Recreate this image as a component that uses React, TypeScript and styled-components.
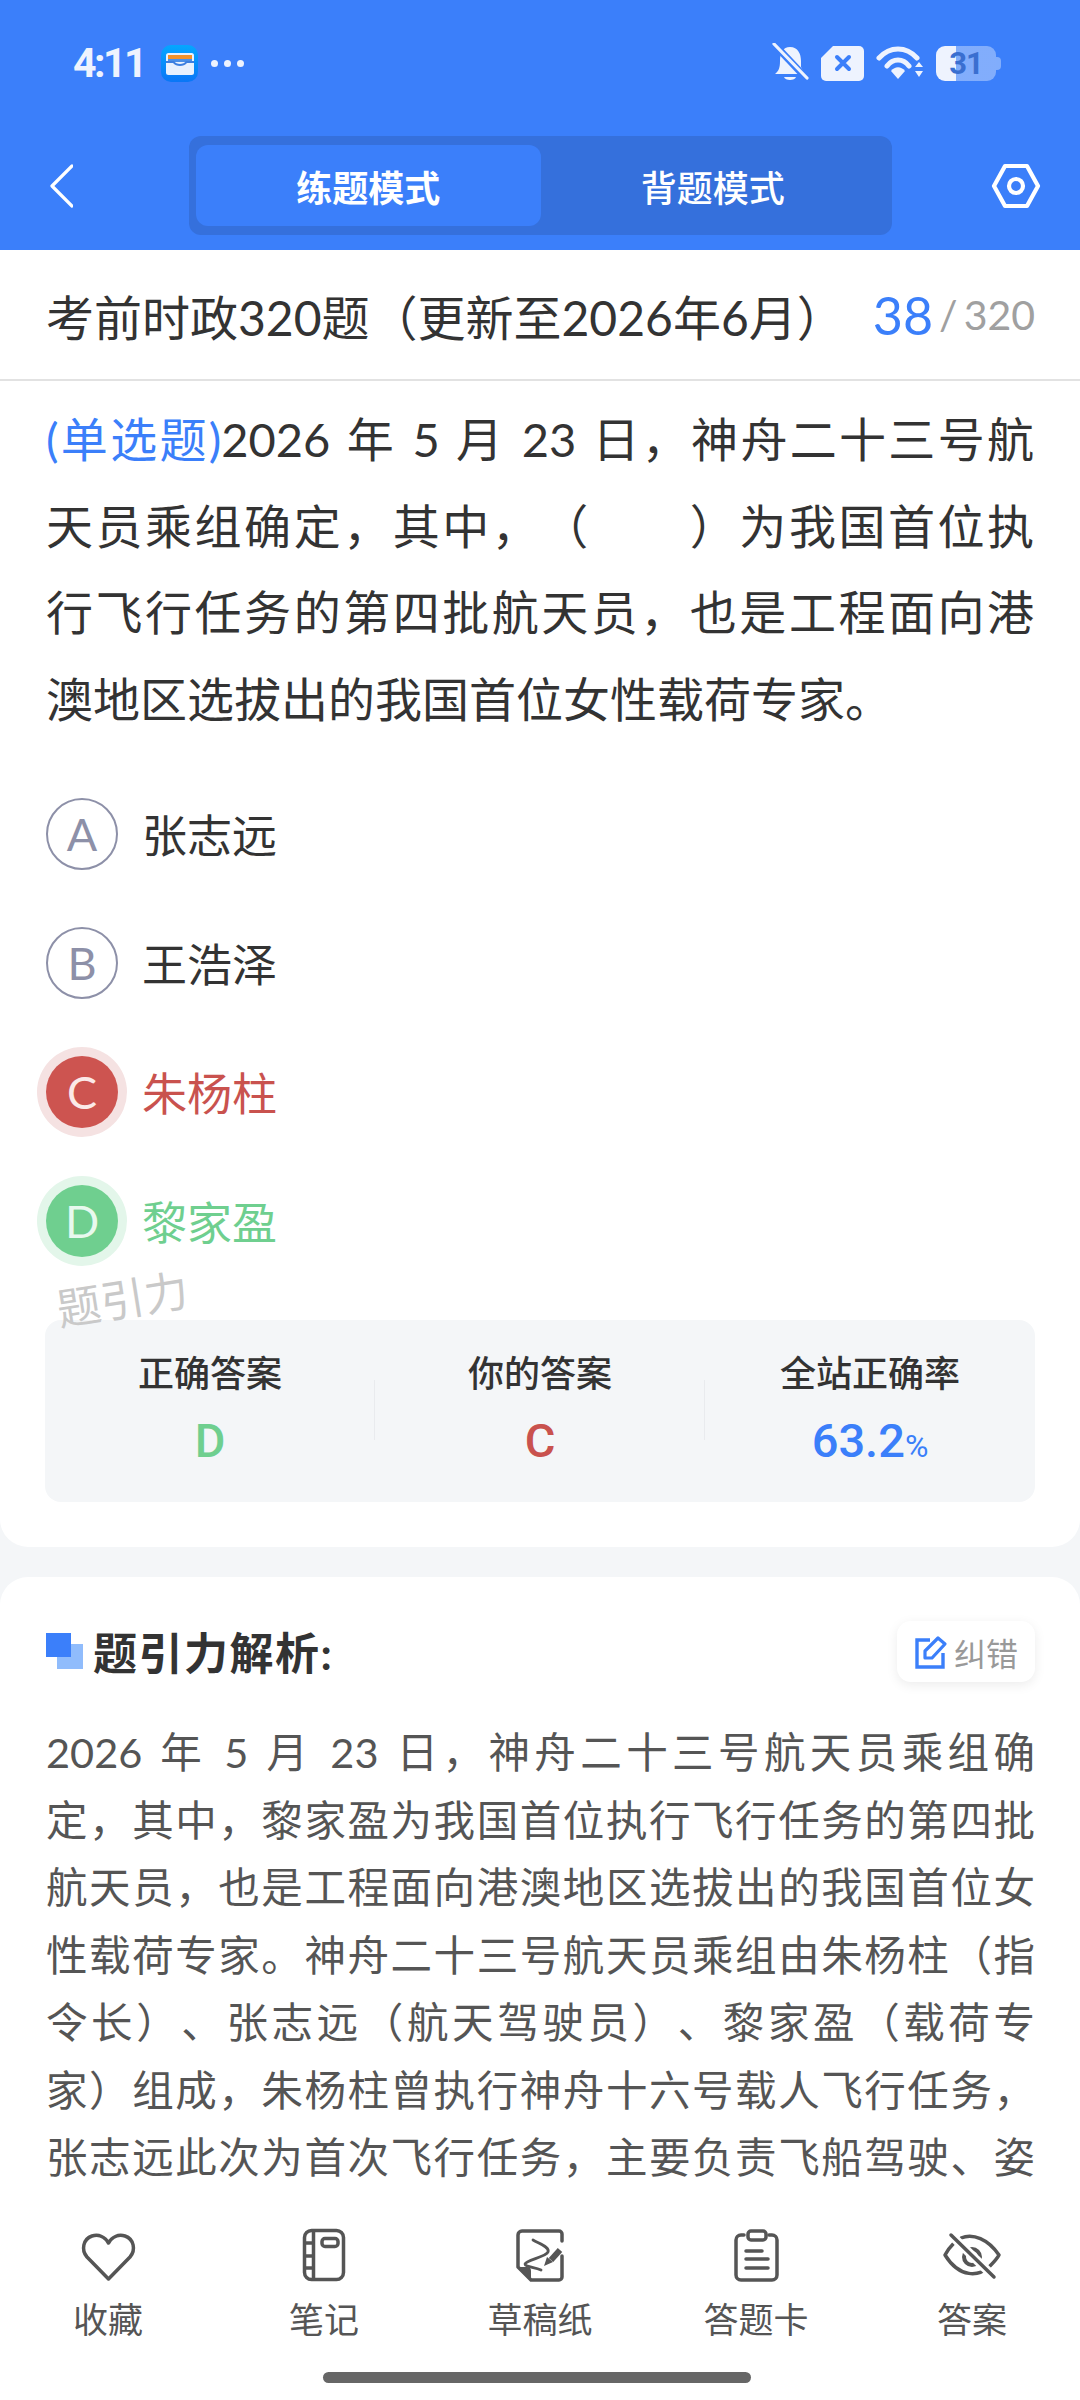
import React from "react";
import styled, { createGlobalStyle } from "styled-components";

const GlobalStyle = createGlobalStyle`
  html, body { margin: 0; padding: 0; background: #f4f6f8; }
  * { box-sizing: border-box; }
  body {
    font-family: Lato, "Noto Sans CJK SC", sans-serif;
    color: #333;
    text-spacing-trim: space-all;
  }
`;

const BLUE = "#3b7ffa";
const RED = "#c9524e";
const GREEN = "#6fcf8f";
const ICON_GREY = "#555";
const STATUS_WHITE = "#eef3fe";

const Page = styled.div`
  width: 1080px;
  height: 2400px;
  display: flex;
  flex-direction: column;
  overflow: hidden;
`;

const Header = styled.header`
  height: 250px;
  flex: none;
  background: ${BLUE};
`;

const StatusBar = styled.div`
  height: 126px;
  display: flex;
  align-items: center;
  padding: 0 79px 0 73px;
`;

const Time = styled.span`
  font-family: Roboto, sans-serif;
  font-size: 41px;
  font-weight: 700;
  letter-spacing: -2.5px;
  color: ${STATUS_WHITE};
  margin-right: 16px;
`;

const Dots = styled.div`
  display: flex;
  gap: 6px;
  margin-left: 13px;
  i {
    width: 7px;
    height: 7px;
    border-radius: 50%;
    background: ${STATUS_WHITE};
  }
`;

const StatusRight = styled.div`
  margin-left: auto;
  display: flex;
  align-items: center;
  gap: 12px;
`;

const Battery = styled.div`
  position: relative;
  width: 60px;
  height: 35px;
  border-radius: 9px;
  background: linear-gradient(90deg, ${STATUS_WHITE} 33%, rgba(255, 255, 255, 0.36) 33%);
  display: flex;
  align-items: center;
  justify-content: center;
  font-family: Roboto, sans-serif;
  font-size: 31px;
  font-weight: 700;
  letter-spacing: -1px;
  color: #3a6fd0;
  margin-right: 5px;
  &::after {
    content: "";
    position: absolute;
    right: -5px;
    top: 11px;
    width: 5px;
    height: 13px;
    border-radius: 0 4px 4px 0;
    background: rgba(255, 255, 255, 0.36);
  }
`;

const NavRow = styled.div`
  margin-top: 10px;
  height: 99px;
  display: flex;
  align-items: center;
  padding: 0 39px 0 49px;
`;

const Tabs = styled.div`
  width: 703px;
  height: 99px;
  margin-left: 116px;
  padding: 9px 7px;
  display: flex;
  border-radius: 12px;
  background: #3570dc;
`;

const Tab = styled.div<{ $active?: boolean }>`
  flex: 1;
  display: flex;
  align-items: center;
  justify-content: center;
  border-radius: 12px;
  font-size: 36px;
  font-weight: ${(p) => (p.$active ? 700 : 500)};
  color: #fff;
  background: ${(p) => (p.$active ? BLUE : "transparent")};
`;

const NavSpacer = styled.div`
  margin-left: auto;
  display: flex;
`;

const Scroll = styled.main`
  flex: 1;
  min-height: 0;
  overflow: hidden;
`;

const QuestionCard = styled.section`
  position: relative;
  background: #fff;
  border-radius: 0 0 28px 28px;
  padding-bottom: 45px;
`;

const TitleRow = styled.div`
  height: 131px;
  padding: 0 45px 0 46px;
  display: flex;
  align-items: center;
  justify-content: space-between;
  border-bottom: 2px solid #e2e2e2;
`;

const Title = styled.h1`
  margin: 0;
  font-size: 48px;
  font-weight: 400;
  color: #333;
  white-space: nowrap;
`;

const Counter = styled.div`
  display: flex;
  align-items: center;
  font-size: 41px;
  color: #a0a0a0;
  b {
    font-size: 52px;
    font-weight: 400;
    color: ${BLUE};
    margin-right: 6px;
  }
  i {
    font-style: normal;
    margin-right: 6px;
  }
`;

const Question = styled.div`
  padding: 15px 46px 0;
`;

const QuestionLine = styled.div<{ $last?: boolean }>`
  font-size: 47px;
  line-height: 86.6px;
  color: #333;
  white-space: nowrap;
  word-spacing: 2px;
  text-align: justify;
  text-align-last: ${(p) => (p.$last ? "left" : "justify")};
  span {
    color: ${BLUE};
  }
`;

const Options = styled.div`
  margin-top: 27px;
  padding: 0 46px;
`;

const OptionRow = styled.div`
  height: 129px;
  display: flex;
  align-items: center;
`;

type Tone = "plain" | "wrong" | "right";

const badgeStyles: Record<Tone, string> = {
  plain: "border: 2px solid #8d90a8; color: #8d90a8; background: #fff;",
  wrong: `background: #cd5450; color: #fbe9e8; box-shadow: 0 0 0 9px #f5e2e2;`,
  right: `background: ${GREEN}; color: #e8f9ee; box-shadow: 0 0 0 9px #e3f6ea;`,
};

const textTones: Record<Tone, string> = { plain: "#333", wrong: RED, right: GREEN };

const Badge = styled.div<{ $tone: Tone }>`
  width: 72px;
  height: 72px;
  flex: none;
  border-radius: 50%;
  display: flex;
  align-items: center;
  justify-content: center;
  font-size: 45px;
  ${(p) => badgeStyles[p.$tone]}
`;

const OptionText = styled.div<{ $tone: Tone }>`
  margin-left: 24px;
  font-size: 45px;
  color: ${(p) => textTones[p.$tone]};
`;

const Watermark = styled.div`
  position: absolute;
  left: 56px;
  top: 1015px;
  font-size: 44px;
  color: #c9c9c9;
  transform: rotate(-9deg);
  pointer-events: none;
`;

const Stats = styled.div`
  margin: 35px 45px 0;
  height: 182px;
  padding-top: 28px;
  display: grid;
  grid-template-columns: repeat(3, 1fr);
  background: #f4f6f8;
  border-radius: 16px;
`;

const Stat = styled.div<{ $divider?: boolean }>`
  position: relative;
  display: flex;
  flex-direction: column;
  align-items: center;
  &::after {
    content: "";
    display: ${(p) => (p.$divider ? "block" : "none")};
    position: absolute;
    right: 0;
    top: 32px;
    width: 1px;
    height: 60px;
    background: #e9ebee;
  }
`;

const StatLabel = styled.div`
  font-size: 36px;
  line-height: 50px;
  font-weight: 500;
  color: #333;
`;

const StatValue = styled.div<{ $color: string }>`
  margin-top: 18px;
  font-family: Roboto, sans-serif;
  font-size: 47px;
  line-height: 50px;
  font-weight: 500;
  color: ${(p) => p.$color};
  small {
    font-size: 32px;
    font-weight: 400;
  }
`;

const AnalysisCard = styled.section`
  margin-top: 30px;
  padding: 44px 45px 0 46px;
  background: #fff;
  border-radius: 28px 28px 0 0;
`;

const AnalysisHead = styled.div`
  height: 61px;
  display: flex;
  align-items: center;
  justify-content: space-between;
`;

const AnalysisTitle = styled.h2`
  margin: 0 0 2px;
  display: flex;
  align-items: center;
  font-size: 44px;
  letter-spacing: 1.5px;
  font-weight: 700;
  color: #333;
`;

const TitleMark = styled.span`
  position: relative;
  width: 37px;
  height: 36px;
  margin-right: 10px;
  &::before,
  &::after {
    content: "";
    position: absolute;
  }
  &::before {
    right: 0;
    bottom: 0;
    width: 26px;
    height: 25px;
    background: #90bcfc;
  }
  &::after {
    left: 0;
    top: 0;
    width: 25px;
    height: 24px;
    background: ${BLUE};
  }
`;

const ReportButton = styled.button`
  width: 138px;
  height: 61px;
  border: 0;
  border-radius: 14px;
  background: #fff;
  box-shadow: 0 3px 12px rgba(0, 0, 0, 0.08);
  display: flex;
  align-items: center;
  justify-content: center;
  gap: 6px;
  padding: 0;
  font-family: inherit;
  font-size: 32px;
  color: #999;
`;

const AnalysisBody = styled.div`
  margin-top: 37px;
`;

const AnalysisLine = styled.div`
  font-size: 41.5px;
  line-height: 67.5px;
  color: #555;
  white-space: nowrap;
  word-spacing: 3px;
  text-align: justify;
  text-align-last: justify;
`;

const BottomBar = styled.footer`
  height: 196px;
  flex: none;
  background: #fff;
  padding-top: 22px;
  display: flex;
  flex-direction: column;
  align-items: center;
`;

const BarItems = styled.div`
  width: 100%;
  display: grid;
  grid-template-columns: repeat(5, 1fr);
`;

const BarItem = styled.div`
  display: flex;
  flex-direction: column;
  align-items: center;
  gap: 11px;
`;

const BarLabel = styled.span`
  font-size: 35px;
  line-height: 44px;
  color: #555;
`;

const HomeIndicator = styled.div`
  margin: 31px 6px 0 0;
  width: 428px;
  height: 11px;
  border-radius: 6px;
  background: #666;
`;

const WalletIcon = () => (
  <svg width="37" height="37" viewBox="0 0 37 37">
    <defs>
      <linearGradient id="wallet" x1="0" y1="0" x2="0" y2="1">
        <stop offset="0" stopColor="#05a6ff" />
        <stop offset="1" stopColor="#0a76f6" />
      </linearGradient>
    </defs>
    <rect width="37" height="37" rx="10" fill="url(#wallet)" />
    <rect x="5" y="8" width="28" height="22" rx="2.5" fill="#e8f1fe" />
    <rect x="7" y="10" width="24" height="4" fill="#f0912a" />
    <rect x="7" y="14" width="24" height="3" fill="#4a8fe8" />
    <path d="M5 16 H13 C15 20 23 20 25 16 H33 V18 H26 C23 22 15 22 12 18 H5Z" fill="#3d7fe0" />
  </svg>
);

const BellIcon = () => (
  <svg width="37" height="40" viewBox="0 0 37 40">
    <path d="M18 4 C26 4 29 11 29 18 L29 24 L33 31 H3 C7 28 8 24 8 18 C8 10 11 4 18 4Z" fill={STATUS_WHITE} />
    <path d="M12 34 H24 C23 38 13 38 12 34Z" fill={STATUS_WHITE} />
    <path d="M3 2 L35 36" stroke={BLUE} strokeWidth="7" />
    <path d="M2 1 L35 35" stroke={STATUS_WHITE} strokeWidth="3.2" strokeLinecap="round" />
  </svg>
);

const SimIcon = () => (
  <svg width="43" height="35" viewBox="0 0 43 35">
    <path d="M12 0 H38 a5 5 0 0 1 5 5 V30 a5 5 0 0 1-5 5 H5 a5 5 0 0 1-5-5 V12 Z" fill={STATUS_WHITE} />
    <path d="M16 11 L28 23 M28 11 L16 23" stroke={BLUE} strokeWidth="4" strokeLinecap="round" />
  </svg>
);

const WifiIcon = () => (
  <svg width="48" height="34" viewBox="0 0 48 34">
    <path d="M3 12 C14 0 30 0 41 12" fill="none" stroke={STATUS_WHITE} strokeWidth="5" strokeLinecap="round" />
    <path d="M11 20 C17 12 27 12 33 20" fill="none" stroke={STATUS_WHITE} strokeWidth="5" strokeLinecap="round" />
    <path d="M15 25 C19 20 25 20 29 25 L22 33Z" fill={STATUS_WHITE} />
    <path d="M39 21 L47 21 L43 16Z M39 25 L47 25 L43 31Z" fill={STATUS_WHITE} />
  </svg>
);

const ChevronIcon = () => (
  <svg width="24" height="44" viewBox="0 0 24 44">
    <path d="M23 2 L3 22 L23 42" fill="none" stroke="#fff" strokeWidth="3.2" strokeLinecap="round" strokeLinejoin="round" />
  </svg>
);

const HexIcon = () => (
  <svg width="50" height="46" viewBox="0 0 50 46">
    <path d="M14 3 H36 L47 23 L36 43 H14 L3 23Z" fill="none" stroke="#fff" strokeWidth="4.2" strokeLinejoin="round" />
    <circle cx="25" cy="23" r="7" fill="none" stroke="#fff" strokeWidth="4.2" />
  </svg>
);

const EditIcon = () => (
  <svg width="34" height="34" viewBox="0 0 34 34">
    <path d="M16 5 H3 V32 H29 V18" fill="none" stroke={BLUE} strokeWidth="3.4" />
    <path d="M11 23 V16 L24 3 L31 9 L18 23Z" fill="none" stroke={BLUE} strokeWidth="3.2" strokeLinejoin="round" />
  </svg>
);

const BarIcon = ({ children }: { children: React.ReactNode }) => (
  <svg
    width="60"
    height="60"
    viewBox="0 0 60 60"
    fill="none"
    stroke={ICON_GREY}
    strokeWidth="3.5"
    strokeLinecap="round"
    strokeLinejoin="round"
  >
    {children}
  </svg>
);

const HeartIcon = () => (
  <BarIcon>
    <path d="M30.5 53 L9 31 C3 24 5 13 14 10 C21 8 27 11 30.5 17 C34 11 40 8 47 10 C56 13 58 24 52 31Z" />
  </BarIcon>
);

const NotebookIcon = () => (
  <BarIcon>
    <rect x="10.5" y="4.5" width="39" height="49" rx="7" />
    <path d="M19.5 4.5 V53.5 M10.5 17 H19.5 M10.5 30 H19.5 M10.5 42 H19.5" strokeLinecap="butt" />
    <rect x="28" y="12.5" width="16" height="8" rx="3" />
  </BarIcon>
);

const DraftIcon = () => (
  <BarIcon>
    <path d="M52 15 V8 a3 3 0 0 0-3-3 H12 a4 4 0 0 0-4 4 V41 L21 54 H49 a3 3 0 0 0 3-3 V30" />
    <path d="M8 41 H17 a4 4 0 0 1 4 4 V54Z" fill={ICON_GREY} stroke="none" />
    <path d="M23 14 C30 18 40 21 38 26 C36 31 16 34 15 38 C15 41 25 41 31 44" strokeWidth="2.8" />
    <path d="M41 34 L50 24" strokeWidth="6" strokeLinecap="butt" />
    <path d="M37 31 L43 36 L34 40Z" fill={ICON_GREY} stroke="none" />
  </BarIcon>
);

const ClipboardIcon = () => (
  <BarIcon>
    <path d="M18 9 H15 a5 5 0 0 0-5 5 V49 a5 5 0 0 0 5 5 H46 a5 5 0 0 0 5-5 V14 a5 5 0 0 0-5-5 H43" />
    <rect x="22" y="5" width="18" height="9" rx="3" />
    <path d="M20 25 H36 M20 33 H42 M20 42 H42" />
  </BarIcon>
);

const EyeOffIcon = () => (
  <BarIcon>
    <path d="M19 12 C31 7 46 13 57 29 C55 33 51 37 47 41 C37 50 18 53 3 29 C5 25 8 21 12 17" />
    <circle cx="30" cy="31" r="8" strokeWidth="4" />
    <path d="M9 9 L52 51" stroke="#fff" strokeWidth="9" strokeLinecap="butt" />
    <path d="M9 9 L52 51" />
  </BarIcon>
);

const options: { key: string; text: string; tone: Tone }[] = [
  { key: "A", text: "张志远", tone: "plain" },
  { key: "B", text: "王浩泽", tone: "plain" },
  { key: "C", text: "朱杨柱", tone: "wrong" },
  { key: "D", text: "黎家盈", tone: "right" },
];

const analysis = [
  "2026 年 5 月 23 日，神舟二十三号航天员乘组确",
  "定，其中，黎家盈为我国首位执行飞行任务的第四批",
  "航天员，也是工程面向港澳地区选拔出的我国首位女",
  "性载荷专家。神舟二十三号航天员乘组由朱杨柱（指",
  "令长）、张志远（航天驾驶员）、黎家盈（载荷专",
  "家）组成，朱杨柱曾执行神舟十六号载人飞行任务，",
  "张志远此次为首次飞行任务，主要负责飞船驾驶、姿",
  "态控制与交会对接，黎家盈主要负责空间科学实验。",
];

const barItems = [
  { label: "收藏", icon: <HeartIcon /> },
  { label: "笔记", icon: <NotebookIcon /> },
  { label: "草稿纸", icon: <DraftIcon /> },
  { label: "答题卡", icon: <ClipboardIcon /> },
  { label: "答案", icon: <EyeOffIcon /> },
];

export default function App() {
  return (
    <Page>
      <GlobalStyle />
      <Header>
        <StatusBar>
          <Time>4:11</Time>
          <WalletIcon />
          <Dots>
            <i />
            <i />
            <i />
          </Dots>
          <StatusRight>
            <BellIcon />
            <SimIcon />
            <WifiIcon />
            <Battery>31</Battery>
          </StatusRight>
        </StatusBar>
        <NavRow>
          <ChevronIcon />
          <Tabs>
            <Tab $active>练题模式</Tab>
            <Tab>背题模式</Tab>
          </Tabs>
          <NavSpacer>
            <HexIcon />
          </NavSpacer>
        </NavRow>
      </Header>

      <Scroll>
        <QuestionCard>
          <TitleRow>
            <Title>考前时政320题（更新至2026年6月）</Title>
            <Counter>
              <b>38</b>
              <i>/</i>320
            </Counter>
          </TitleRow>
          <Question>
            <QuestionLine>
              <span>(单选题)</span>2026 年 5 月 23 日，神舟二十三号航
            </QuestionLine>
            <QuestionLine>天员乘组确定，其中，（　　）为我国首位执</QuestionLine>
            <QuestionLine>行飞行任务的第四批航天员，也是工程面向港</QuestionLine>
            <QuestionLine $last>澳地区选拔出的我国首位女性载荷专家。</QuestionLine>
          </Question>
          <Options>
            {options.map((o) => (
              <OptionRow key={o.key}>
                <Badge $tone={o.tone}>{o.key}</Badge>
                <OptionText $tone={o.tone}>{o.text}</OptionText>
              </OptionRow>
            ))}
          </Options>
          <Watermark>题引力</Watermark>
          <Stats>
            <Stat $divider>
              <StatLabel>正确答案</StatLabel>
              <StatValue $color={GREEN}>D</StatValue>
            </Stat>
            <Stat $divider>
              <StatLabel>你的答案</StatLabel>
              <StatValue $color={RED}>C</StatValue>
            </Stat>
            <Stat>
              <StatLabel>全站正确率</StatLabel>
              <StatValue $color={BLUE}>
                63.2<small>%</small>
              </StatValue>
            </Stat>
          </Stats>
        </QuestionCard>

        <AnalysisCard>
          <AnalysisHead>
            <AnalysisTitle>
              <TitleMark />
              题引力解析:
            </AnalysisTitle>
            <ReportButton>
              <EditIcon />
              纠错
            </ReportButton>
          </AnalysisHead>
          <AnalysisBody>
            {analysis.map((line) => (
              <AnalysisLine key={line}>{line}</AnalysisLine>
            ))}
          </AnalysisBody>
        </AnalysisCard>
      </Scroll>

      <BottomBar>
        <BarItems>
          {barItems.map((item) => (
            <BarItem key={item.label}>
              {item.icon}
              <BarLabel>{item.label}</BarLabel>
            </BarItem>
          ))}
        </BarItems>
        <HomeIndicator />
      </BottomBar>
    </Page>
  );
}
